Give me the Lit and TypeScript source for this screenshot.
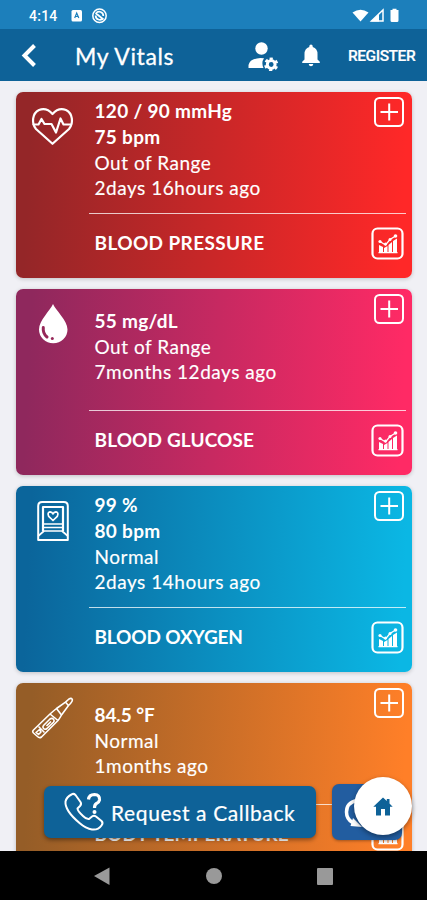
import { LitElement, html, svg, css } from "lit";
import { customElement, property } from "lit/decorators.js";
import { classMap } from "lit/directives/class-map.js";

interface Vital {
  kind: string;
  strong: string[];
  plain: string[];
  title: string;
}

const VITALS: Vital[] = [
  { kind: "pressure", strong: ["120 / 90 mmHg", "75 bpm"], plain: ["Out of Range", "2days 16hours ago"], title: "BLOOD PRESSURE" },
  { kind: "glucose", strong: ["55 mg/dL"], plain: ["Out of Range", "7months 12days ago"], title: "BLOOD GLUCOSE" },
  { kind: "oxygen", strong: ["99 %", "80 bpm"], plain: ["Normal", "2days 14hours ago"], title: "BLOOD OXYGEN" },
  { kind: "temperature", strong: ["84.5 °F"], plain: ["Normal", "1months ago"], title: "BODY TEMPERATURE" },
];

// Each glyph is drawn in a 44x46 box placed at the card's left edge.
const GLYPHS: Record<string, unknown> = {
  pressure: svg`<g fill="none" stroke="#fff" stroke-width="2.200" stroke-linejoin="round" stroke-linecap="round">
    <path d="M21.500 38.800L5 24C0 18 1.500 8 8 5C13.500 3 18 5 21.500 9C25 5 29.500 3 35 5C41.500 8 43 18 38 24Z"/>
    <path d="M2.500 19.500H7.500L10.500 14L13.500 19H20.500L25 27.500L29.500 13.500L32.500 19.500H40"/></g>`,
  glucose: svg`<path fill="#fff" d="M22 2C24.500 8 36.500 18.500 36.500 27.500A14.200 13.800 0 0 1 8 27.500C8 18.500 19.500 8 22 2Z"/>
    <g class="ink"><path d="M12.300 25.500C11.700 30.500 13.500 33 16 35" fill="none" stroke-width="3" stroke-linecap="round"/><circle cx="21.300" cy="36.500" r="1.500" stroke="none"/></g>`,
  oxygen: svg`<g fill="none" stroke="#fff" stroke-width="2" stroke-linejoin="round">
    <path d="M7.200 41V7Q7.200 3 11.200 3H32.800Q36.800 3 36.800 7V41Z"/>
    <path d="M12 32V8H32V32" stroke-width="2.200"/>
    <path d="M12 25H32M12 28.500H32M7.200 37L13 32H31L36.800 37" stroke-width="1.700"/>
    <path d="M22 21.500L17.700 17.300Q16 13.500 19 12.800Q21.200 12.700 22 15Q22.800 12.700 25 12.800Q28 13.500 26.300 17.300Z" stroke-width="1.700"/></g>`,
  temperature: svg`<g fill="none" stroke="#fff" stroke-width="1.600" stroke-linejoin="round">
    <path d="M2.500 34L19 18Q23 14.500 25.500 12.500L34.500 6.200L38 3Q40.500 1.500 41.300 3.500Q41.800 5 39.500 7.500L37.500 9.500L30.500 19Q29 22 27 24.500L10.500 41Q8.500 42.500 6.500 40.500L2.500 37Q1 35.500 2.500 34Z"/>
    <path d="M19 18L27 24.500M25.500 12.500L30.500 19M34.500 6.200L37.500 9.500M12.500 29.500L19 23Q21 21.500 22.500 23.200Q23.800 24.800 22.500 26.200L16 32.500Q14 34 12.500 32.500Q11.200 31 12.500 29.500ZM15.500 30L20 25.500M7.500 30.500L13.500 36.500M5 36.500L8.500 33.500L10 36L7.500 38.500Z"/></g>`,
};

const CHART = svg`<rect x="1.500" y="1.500" width="30" height="30" rx="5" fill="none" stroke="#fff" stroke-width="2.200"/>
  <g fill="#fff"><path d="M8 18L12 20V25H8ZM13 21L16.500 19V25H13ZM17.500 18L21 15V25H17.500ZM22 14L26 11.500V25H22ZM7.500 25H26.500V26.300H7.500Z"/>
  <path d="M9 14.500L14.500 18L19 12.500L24.500 9" fill="none" stroke="#fff" stroke-width="1.300"/>
  <circle cx="9" cy="14.500" r="1.600"/><circle cx="14.500" cy="17" r="1.500"/><circle cx="19" cy="12.500" r="1.500"/><circle cx="24.500" cy="9" r="1.800"/></g>`;

@customElement("vital-card")
export class VitalCard extends LitElement {
  @property({ attribute: false }) vital!: Vital;

  static styles = css`
    :host { display: block; }
    .card {
      height: 186px; box-sizing: border-box; border-radius: 7px; color: #fff;
      display: grid; grid-template-columns: 73px 1fr 40px; grid-template-rows: 121px 1fr;
      box-shadow: 0 1px 4px #0003; font-size: 19px; line-height: 25.7px;
    }
    .pressure { background: linear-gradient(93deg, #942628 4%, #ff2828 97%); }
    .glucose { background: linear-gradient(93deg, #8f285d 4%, #ff2a65 97%); }
    .oxygen { background: linear-gradient(93deg, #0b659b 4%, #0bb7e4 97%); }
    .temperature { background: linear-gradient(93deg, #955d27 4%, #ff7f28 97%); }
    .glyph { margin: 13px 0 0 15px; width: 44px; height: 46px; display: block; }
    .ink { fill: #962859; stroke: #962859; }
    .lines { height: 115px; padding-left: 5.5px; display: flex; flex-direction: column; justify-content: center; white-space: nowrap; }
    .strong { font-weight: 700; letter-spacing: .3px; }
    .temperature .strong { letter-spacing: -.1px; }
    .plain { letter-spacing: .52px; -webkit-text-stroke: .15px #fff; }
    .plus { display: block; width: 32px; height: 32px; margin: 3.500px 0 0 1px; }
    .foot {
      grid-column: 2 / 4; margin-right: 6px; border-top: 1px solid #ffffffc0; padding-left: 5.5px;
      display: flex; justify-content: space-between; align-items: flex-start;
    }
    .title { font-weight: 700; padding-top: 16px; }
    .pressure .title { letter-spacing: .38px; }
    .glucose .title { letter-spacing: .12px; }
    .oxygen .title { letter-spacing: -.15px; }
    .temperature .title { letter-spacing: .1px; }
    .chart { width: 33px; height: 33px; margin: 13px 2px 0 0; }
  `;

  render() {
    const v = this.vital;
    return html`<div class=${classMap({ card: true, [v.kind]: true })}>
      <svg class="glyph" viewBox="0 0 44 46">${GLYPHS[v.kind]}</svg>
      <div class="lines">
        ${v.strong.map((t) => html`<div><span class="strong">${t}</span></div>`)}
        ${v.plain.map((t) => html`<div><span class="plain">${t}</span></div>`)}
      </div>
      <svg class="plus" viewBox="0 0 32 32" fill="none" stroke="#fff" stroke-width="2">
        <rect x="2" y="2" width="28" height="28" rx="4.500"/><path d="M7.500 16H25M16.200 7.500V24.500"/>
      </svg>
      <div class="foot"><span class="title">${v.title}</span>
        <svg class="chart" viewBox="0 0 33 33">${CHART}</svg></div>
    </div>`;
  }
}

@customElement("app-root")
export class AppRoot extends LitElement {
  static styles = css`
    :host {
      position: relative; display: flex; flex-direction: column; height: 900px; overflow: hidden;
      background: #f0f0f5; font-family: Lato, "Noto Sans", sans-serif; color: #fff;
    }
    .status { flex: none; height: 29px; background: #1c7fbb; display: flex; align-items: center; padding: 3px 27px 0 29px; box-sizing: border-box; }
    .time { font: 500 14px/16px Roboto, sans-serif; letter-spacing: .25px; width: 42px; }
    .badges { width: 38px; height: 16px; }
    .signals { width: 48px; height: 16px; margin-left: auto; }
    .bar { flex: none; height: 52px; background: #0e6298; display: flex; align-items: center; }
    .back { width: 18px; height: 26px; margin-left: 20px; }
    .heading { margin-left: 37px; padding-top: 2px; font-size: 23px; line-height: 30px; letter-spacing: .6px; width: 170px; white-space: nowrap; -webkit-text-stroke: .3px #fff; }
    .user { width: 32px; height: 32px; margin-left: 3px; }
    .bell { width: 20px; height: 24px; margin-left: 21px; }
    .register { font: 500 15.500px/20px Roboto, sans-serif; margin-left: 27px; padding-top: 2px; letter-spacing: -.45px; -webkit-text-stroke: .2px #fff; }
    .list { flex: 1; min-height: 0; overflow: hidden; padding: 11px 15px 0 16px; display: flex; flex-direction: column; gap: 11px; }
    vital-card { flex: none; }
    .nav { position: relative; flex: none; height: 49px; background: #000; }
    .nav svg { display: block; width: 427px; height: 49px; }
    .callback {
      position: absolute; left: 44px; top: 786px; width: 272px; height: 52px; box-sizing: border-box;
      background: #0e6298; border-radius: 7px; box-shadow: 0 2px 4px #0006; display: flex; align-items: center;
      padding-left: 19px; gap: 6px; font-size: 21px; letter-spacing: .62px; white-space: nowrap; -webkit-text-stroke: .2px #fff;
    }
    .phone { flex: none; width: 42px; height: 42px; }
    .sync { position: absolute; left: 332px; top: 784px; width: 70px; height: 56px; border-radius: 7px; background: #225da0; box-shadow: 0 1px 3px #0005; }
    .sync svg { display: block; width: 70px; height: 56px; }
    .home { position: absolute; left: 354px; top: 777px; width: 58px; height: 58px; border-radius: 50%; background: #fff; box-shadow: 0 2px 5px #0006; display: grid; place-items: center; }
    .home svg { width: 20px; height: 19px; }
  `;

  render() {
    return html`
      <div class="status">
        <span class="time">4:14</span>
        <svg class="badges" viewBox="0 0 38 16">
          <rect x=".5" y="2" width="10.500" height="11.500" rx="1.500" fill="#fff"/>
          <path d="M3.700 10L5.700 5L7.800 10M4.500 8.500H7" fill="none" stroke="#1c7fbb" stroke-width="1.200"/>
          <g fill="none" stroke="#fff" stroke-width="1.500"><circle cx="28.500" cy="7.700" r="6.700"/>
          <path d="M25 5.500A4 4 0 0 1 32.300 8M32 10A4 4 0 0 1 24.700 7.500M24.500 5L32.500 11.500" stroke-width="1.700"/></g>
        </svg>
        <svg class="signals" viewBox="0 0 48 16" fill="#fff">
          <path d="M.5 4.500Q8.500-1 16.500 4.500L8.500 13.500Z"/>
          <path d="M31 2V13H19.500Z" fill="none" stroke="#fff" stroke-width="1.500"/><path d="M19 13.500L27 6V13.500Z"/>
          <path d="M38.500 2H40.500V.7H44.500V2H46.500V12.500Q46.500 14 45 14H40Q38.500 14 38.500 12.500Z"/>
        </svg>
      </div>
      <div class="bar">
        <svg class="back" viewBox="0 0 18 26"><path d="M14.500 3.500L4.500 13.500L14.500 23.500" fill="none" stroke="#fff" stroke-width="4"/></svg>
        <span class="heading">My Vitals</span>
        <svg class="user" viewBox="0 0 32 32" fill="#fff">
          <circle cx="13.500" cy="9.500" r="6.200"/><path d="M.5 29V26Q2 19.500 12.500 19L16 19.300Q13 23.500 15.500 29Z"/>
          <circle cx="23.200" cy="25.500" r="3.900" fill="none" stroke="#fff" stroke-width="3"/>
          <circle cx="23.200" cy="25.500" r="5.700" fill="none" stroke="#fff" stroke-width="2.800" stroke-dasharray="3 2.970" transform="rotate(-105 23.200 25.500)"/>
        </svg>
        <svg class="bell" viewBox="0 0 20 24" fill="#fff"><path d="M8.300 4V3Q8.500 1.500 10 1.500Q11.500 1.500 11.700 3V4Q16.500 5.500 16.500 11V16.500L18.800 18.800V20H1.200V18.800L3.500 16.500V11Q3.500 5.500 8.300 4ZM7.700 21H12.300Q12 23.300 10 23.300Q8 23.300 7.700 21Z"/></svg>
        <span class="register">REGISTER</span>
      </div>
      <div class="list">${VITALS.map((v) => html`<vital-card .vital=${v}></vital-card>`)}</div>
      <div class="nav">
        <svg viewBox="0 0 427 49" fill="#999"><path d="M94 25L109.500 16.500V34Z"/><circle cx="214" cy="25" r="8"/><rect x="317" y="17" width="16" height="17" rx="1"/></svg>
      </div>
      <div class="callback">
        <svg class="phone" viewBox="0 0 42 42" fill="none" stroke="#fff" stroke-width="2" stroke-linejoin="round">
          <path d="M8.500 3.500Q10.500 2 12.500 4L17.500 11Q18.800 13 17 15L14.500 17.500Q14.500 20 20 25Q23.500 28.500 26 28L29 25.500Q31 24 33 25.500L38.500 30Q40.500 32 38.500 34.500C34 41 25 39.500 16.500 32C7 24 2 16 2.500 10.500Q3.500 6 8.500 3.500Z"/>
          <path d="M25.500 8.500Q26 3.500 31.500 3.500Q37 3.800 36.500 9Q36 11.500 33.500 12.500Q31.500 13.500 31.500 17" stroke-width="3.200"/><circle cx="31.500" cy="21" r="2" fill="#fff" stroke="none"/>
        </svg>
        <span>Request a Callback</span>
      </div>
      <div class="sync"><svg viewBox="0 0 70 56"><path d="M25 16.500Q14.500 18.500 14.500 28Q14.500 35 20.500 38.500" fill="none" stroke="#fff" stroke-width="3.500"/><path d="M18.500 42L21 34L30 43Z" fill="#fff"/></svg></div>
      <div class="home"><svg viewBox="0 0 20 19"><path d="M10 .5L13.800 4V2H16.500V6.500L19.700 9.700H17V18.500H12V12H8V18.500H3V9.700H.3Z" fill="#0e6298"/></svg></div>
    `;
  }
}
